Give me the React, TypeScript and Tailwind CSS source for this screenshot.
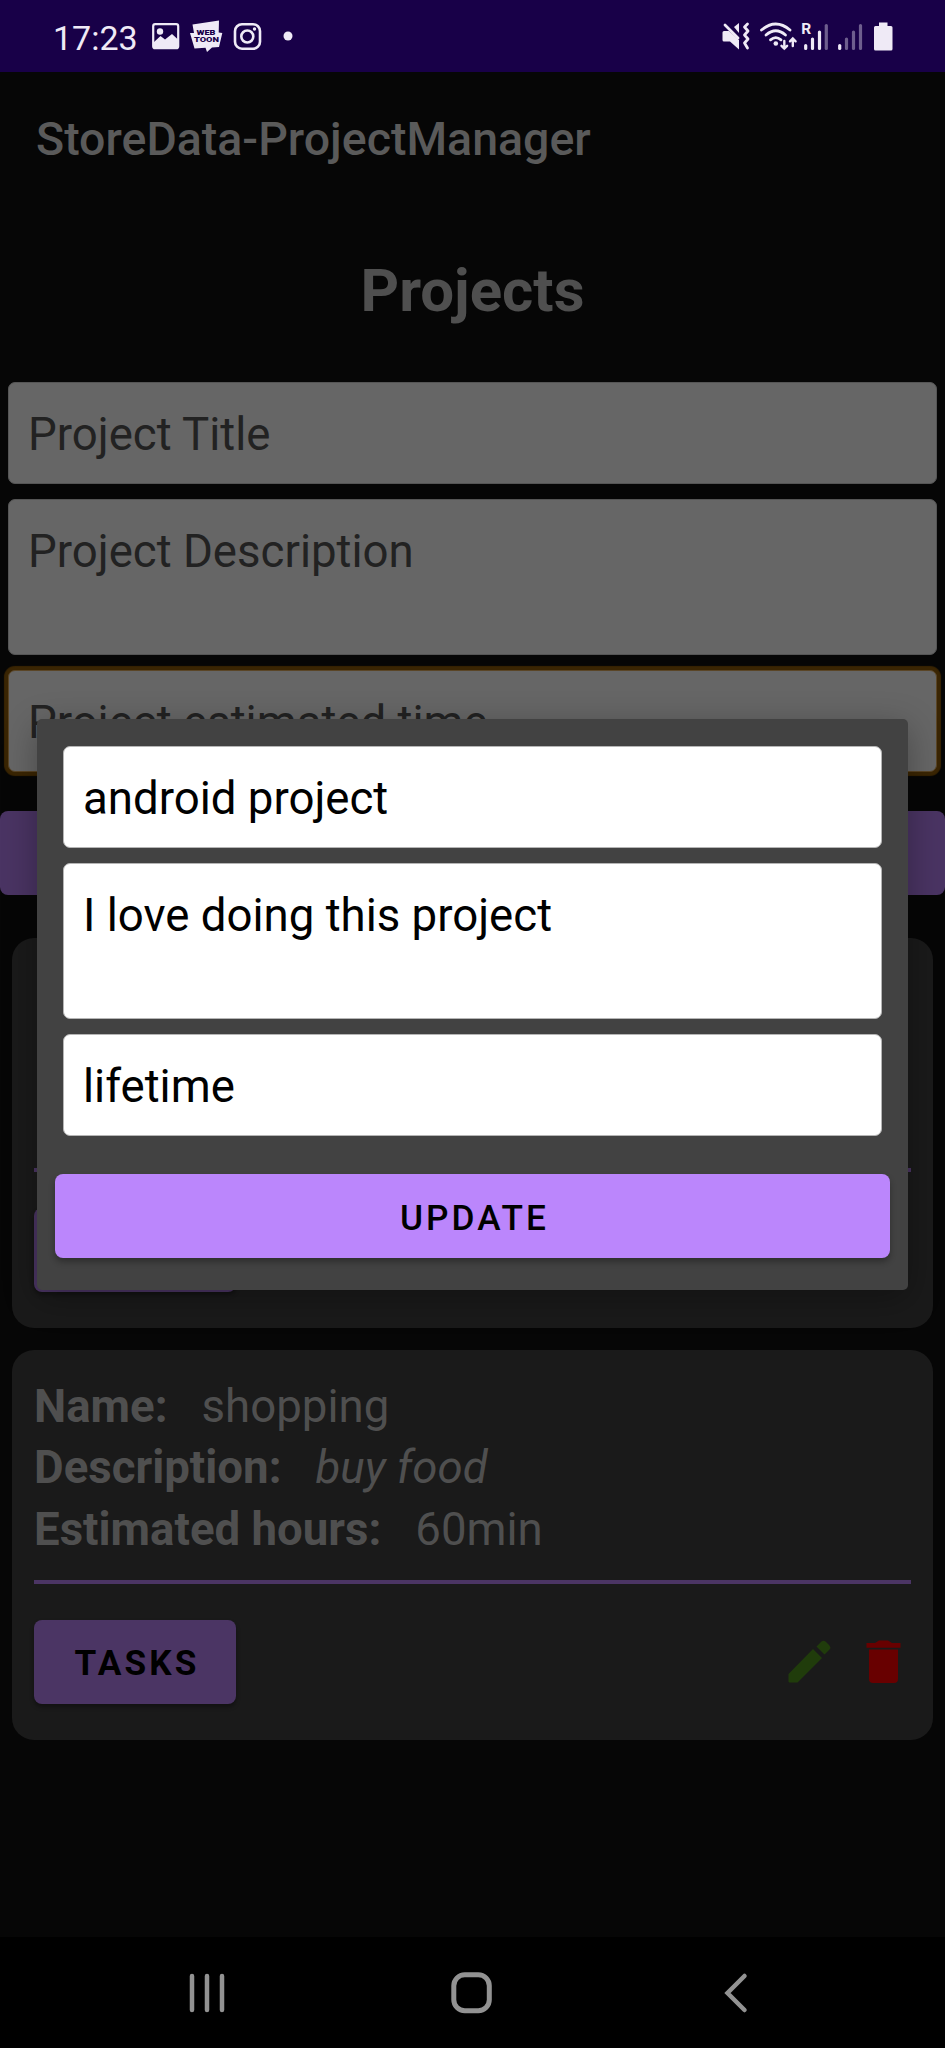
import React from "react";

const roboto = "font-[Roboto,'Noto_Sans',sans-serif]";

function StatusBar() {
  return (
    <header className="flex h-[72px] shrink-0 items-start bg-[#180048] text-[#efeaf6]">
      <span className="ml-[53px] mt-[18px] w-[84px] text-[34px] leading-[40px]">17:23</span>
      <svg className="ml-[13px]" width="150" height="72" viewBox="150 0 150 72">
        <rect x="153.2" y="24.2" width="25" height="24" rx="2" fill="none" stroke="currentColor" strokeWidth="2.2" />
        <circle cx="160" cy="31.5" r="3.2" fill="currentColor" />
        <path d="M154 42 L160.500 36 L165 39.500 L172 34 L178 39.500 V48 H154Z" fill="currentColor" />
        <path d="M192.500 24.500 L219 20.500 L218.700 32.500 L222.300 33 L219 47 L212 47.500 L207 52 L205.500 47.800 L194.500 48.500 L190 33 L194 33Z" fill="currentColor" />
        <text x="196.500" y="35" textLength="19" lengthAdjust="spacingAndGlyphs" fontSize="8" fontWeight="900" fill="#180048">WEB</text>
        <text x="194" y="42.400" textLength="25" lengthAdjust="spacingAndGlyphs" fontSize="8" fontWeight="900" fill="#180048">TOON</text>
        <rect x="235" y="24.200" width="25" height="24.500" rx="7" fill="none" stroke="currentColor" strokeWidth="2.600" />
        <circle cx="247.300" cy="36.500" r="6" fill="none" stroke="currentColor" strokeWidth="2.600" />
        <circle cx="254.500" cy="29" r="1.700" fill="currentColor" />
        <circle cx="288" cy="36" r="4.500" fill="currentColor" />
      </svg>
      <svg className="ml-auto mr-[35px]" width="190" height="72" viewBox="720 0 190 72">
        <g fill="none" stroke="currentColor" strokeWidth="2.800" strokeLinecap="round" strokeLinejoin="round">
          <path d="M725 25 L738 38" />
          <path d="M747.500 24 L744.500 27 L748 31 L744.500 35 L748 39 L744.500 43 L747.500 48" />
          <path d="M761.500 30 Q775.800 18 790 30" />
          <path d="M766 35 Q775.800 26.500 785.500 35" />
          <path d="M770.500 39.800 Q775.800 35.500 781 39.800" />
        </g>
        <path d="M724 31 H729 L739 40 V49.500 L730 41.500 H724 Q722.500 41.500 722.500 40 V32.500 Q722.500 31 724 31Z" fill="currentColor" />
        <path d="M734 27 L739 23 V33Z" fill="currentColor" />
        <circle cx="775.800" cy="43.500" r="2.300" fill="currentColor" />
        <path d="M784.300 41 V48.500 M781.500 45.800 L784.300 48.600 L787.100 45.800 M792.800 46 V38.500 M790 41.300 L792.800 38.500 L795.600 41.300" fill="none" stroke="currentColor" strokeWidth="2.400" strokeLinecap="round" />
        <text x="801.300" y="33.500" fontSize="15.500" fontWeight="700" fill="currentColor">R</text>
        <g strokeWidth="3.200" strokeLinecap="round" stroke="currentColor">
          <path d="M805.700 45.500 V48.500 M812.500 39 V48.500 M819.500 32 V48.500" />
          <path d="M826.300 25.500 V48.500" opacity=".4" />
          <path d="M839.700 45.500 V48.500" />
          <path d="M846.500 39 V48.500 M853.500 32 V48.500 M860.500 25.500 V48.500" opacity=".4" />
        </g>
        <path d="M879 22.500 H887.500 V26 H891 Q892.500 26 892.500 27.500 V49 Q892.500 50.500 891 50.500 H875.500 Q874 50.500 874 49 V27.500 Q874 26 875.500 26 H879Z" fill="currentColor" />
      </svg>
    </header>
  );
}

function Field({ text, tall = false, focused = false }: { text: string; tall?: boolean; focused?: boolean }) {
  return (
    <div
      className={`${tall ? "h-[156px]" : "h-[102px]"} ${focused ? "border-[#5a4526] shadow-[0_0_1px_4px_#3a2503]" : "border-[#555]"} rounded-[7px] border bg-[#666] px-[19px] pt-[25px] text-[45.6px] leading-[54px] text-[#222]`}
    >
      {text}
    </div>
  );
}

function DialogField({ text, tall = false }: { text: string; tall?: boolean }) {
  return (
    <div
      className={`${tall ? "h-[156px]" : "h-[102px]"} rounded-[7px] border border-[#b5b5b5] bg-white px-[19px] pt-[25px] text-[45.6px] leading-[54px] text-black`}
    >
      {text}
    </div>
  );
}

function Row({ label, value, italic = false }: { label: string; value: string; italic?: boolean }) {
  return (
    <div className="flex gap-[34px] whitespace-nowrap">
      <span className="font-bold">{label}</span>
      <span className={italic ? "italic" : ""}>{value}</span>
    </div>
  );
}

type Project = { name: string; description: string; hours: string };

function ProjectCard({ project }: { project?: Project }) {
  return (
    <section className="h-[390px] rounded-[22px] bg-[#1a1a1a] px-[22px] pt-[26px] text-[45.6px] leading-[61.300px] text-[#4f4f4f]">
      <div className="h-[184px]">
        {project && (
          <>
            <Row label="Name:" value={project.name} />
            <Row label="Description:" value={project.description} italic />
            <Row label="Estimated hours:" value={project.hours} />
          </>
        )}
      </div>
      <div className="mt-[20px] h-[4px] bg-[#4b3564]" />
      <div className="mt-[36px] flex items-center">
        <div className="flex h-[84px] w-[202px] items-center justify-center rounded-[8px] bg-[#4b3564] pl-[4px] pt-[4px] text-[35.200px] font-bold leading-none tracking-[3.100px] text-black shadow-[0_3px_4px_rgba(0,0,0,0.35)]">
          {project && "TASKS"}
        </div>
        {project && (
          <svg className="ml-auto mr-[8px]" width="118" height="48" viewBox="785 1638 118 48">
            <path d="M788.500 1674 L813 1649 L822 1658 L797.500 1682.500 H789.500 Q788.500 1682.500 788.500 1681.500Z M816.500 1646.500 L821.500 1641.500 Q823.500 1639.800 825.500 1641.500 L829.500 1645.500 Q831.200 1647.500 829.500 1649.500 L824.500 1654.500Z" fill="#203c0b" />
            <path d="M869 1649.500 H898 V1679 Q898 1683 894 1683 H873 Q869 1683 869 1679Z M866.500 1643 H875 L879 1640.500 H888 L892 1643 H900.500 V1647.800 H866.500Z" fill="#680000" />
          </svg>
        )}
      </div>
    </section>
  );
}

function NavigationBar() {
  return (
    <nav className="flex h-[111px] shrink-0 items-center bg-black pl-[187px] pr-[193px] text-[#929292]">
      <svg width="40" height="44" viewBox="187 1971 40 44">
        <path d="M192 1976 V2010 M207 1976 V2010 M222 1976 V2010" fill="none" stroke="currentColor" strokeWidth="4.500" strokeLinecap="round" />
      </svg>
      <svg className="ml-[222px]" width="46" height="44" viewBox="449 1971 46 44">
        <rect x="453.800" y="1974.800" width="35.500" height="36" rx="11" fill="none" stroke="currentColor" strokeWidth="5" />
      </svg>
      <svg className="ml-auto" width="30" height="44" viewBox="722 1971 30 44">
        <path d="M744.500 1976 L727.500 1993 L744.500 2010" fill="none" stroke="currentColor" strokeWidth="4.500" strokeLinecap="round" />
      </svg>
    </nav>
  );
}

export default function App() {
  return (
    <div className={`relative flex h-[2048px] w-[945px] flex-col overflow-hidden bg-[#060606] ${roboto}`}>
      <StatusBar />
      <main className="flex flex-1 flex-col">
        <h2 className="ml-[36px] mt-[39px] text-[46.500px] font-medium leading-[56px] text-[#5a5a5a]">StoreData-ProjectManager</h2>
        <h1 className="mt-[89px] text-center text-[60px] font-bold leading-[70px] text-[#4f4f4f]">Projects</h1>
        <div className="mx-[8px] mt-[56px] flex flex-col gap-[15px]">
          <Field text="Project Title" />
          <Field text="Project Description" tall />
          <Field text="Project estimated time" focused />
        </div>
        <div className="mt-[39px] h-[84px] shrink-0 rounded-[8px] bg-[#4a3463]" />
        <div className="mx-[12px] mt-[43px] flex flex-col gap-[22px]">
          <ProjectCard />
          <ProjectCard project={{ name: "shopping", description: "buy food", hours: "60min" }} />
        </div>
      </main>
      <NavigationBar />
      <div className="absolute left-[37px] top-[719px] flex h-[571px] w-[871px] flex-col rounded-[5px] bg-[#424242] px-[18px] pt-[27px] shadow-[0_8px_34px_rgba(0,0,0,0.3)]">
        <div className="mx-[8px] flex flex-col gap-[15px]">
          <DialogField text="android project" />
          <DialogField text="I love doing this project" tall />
          <DialogField text="lifetime" />
        </div>
        <div className="mt-[38px] flex h-[84px] items-center justify-center rounded-[8px] bg-[#bb86fc] pl-[4px] pt-[5px] text-[35.200px] font-medium leading-none tracking-[3.100px] text-black shadow-[0_4px_6px_rgba(0,0,0,0.3)]">
          UPDATE
        </div>
      </div>
    </div>
  );
}
